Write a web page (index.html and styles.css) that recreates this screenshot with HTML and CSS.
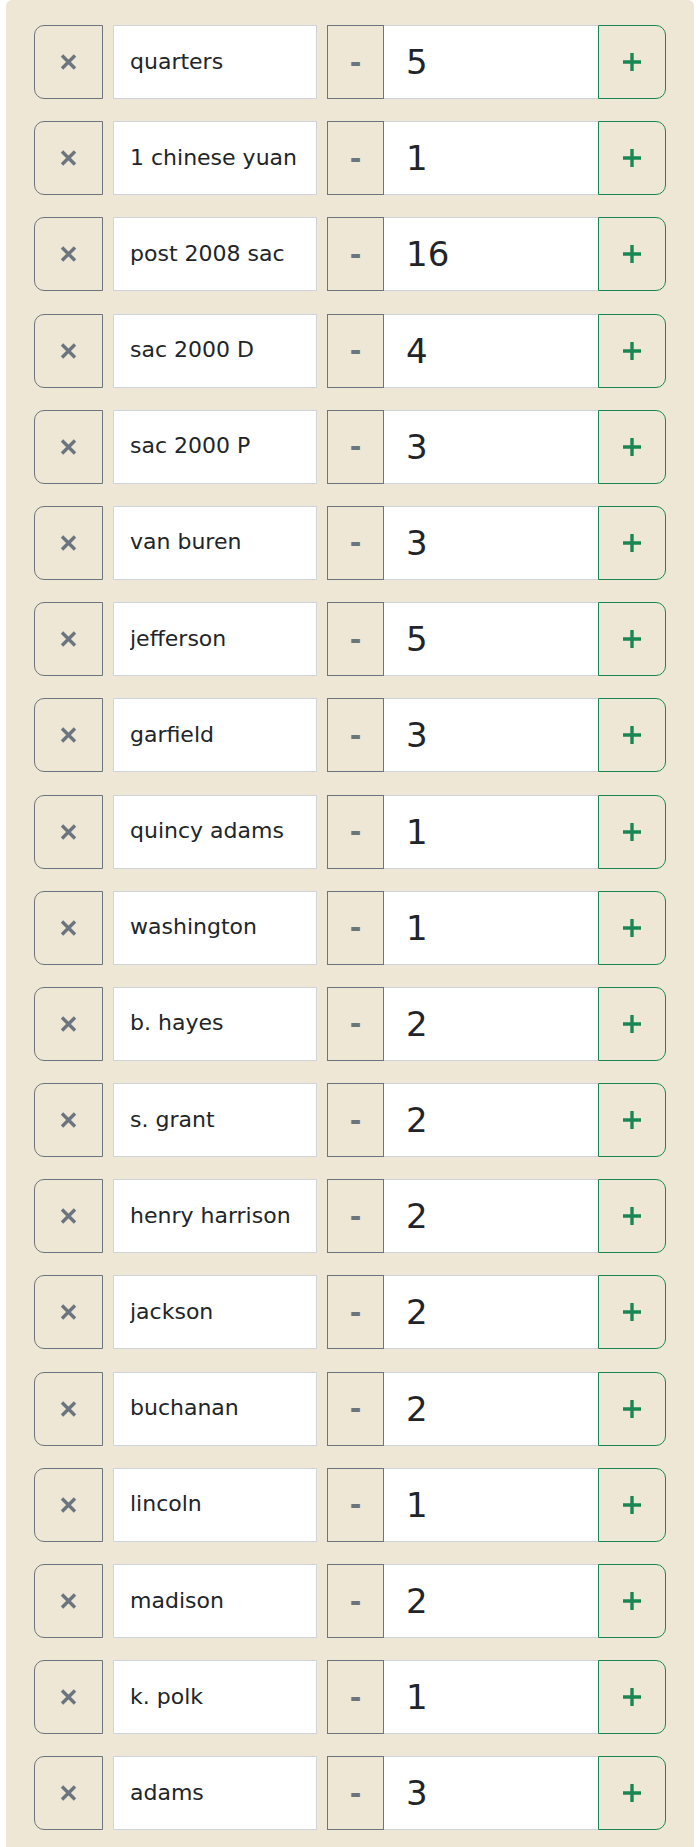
FILE: index.html
```html
<!DOCTYPE html>
<html>
  <head>
    <meta charset="utf-8">
    <title>Coin Counter</title>
    <link rel="stylesheet" href="styles.css">
  </head>
  <body>
    <div class="panel">
      <ul class="coins" id="coins"></ul>
    </div>

    <script>
      const coins = [
        ['quarters', 5], ['1 chinese yuan', 1], ['post 2008 sac', 16],
        ['sac 2000 D', 4], ['sac 2000 P', 3], ['van buren', 3],
        ['jefferson', 5], ['garfield', 3], ['quincy adams', 1],
        ['washington', 1], ['b. hayes', 2], ['s. grant', 2],
        ['henry harrison', 2], ['jackson', 2], ['buchanan', 2],
        ['lincoln', 1], ['madison', 2], ['k. polk', 1], ['adams', 3]
      ];

      const list = document.getElementById('coins');
      coins.forEach(([name, count]) => {
        const row = document.createElement('li');
        row.className = 'coin-row';
        row.innerHTML = `
          <button class="remove" title="remove">
            <svg width="17" height="16" viewBox="0 0 17 16"><path d="M2 1.5 L15 14.5 M15 1.5 L2 14.5" stroke="#6c757d" stroke-width="3.4" fill="none"/></svg>
          </button>
          <input class="name" type="text" value="${name}">
          <div class="counter">
            <button class="dec">-</button>
            <input class="count" type="number" value="${count}">
            <button class="inc">
              <svg width="18" height="18" viewBox="0 0 18 18"><path d="M9 0 V18 M0 9 H18" stroke="#198754" stroke-width="3.4" fill="none"/></svg>
            </button>
          </div>`;
        list.appendChild(row);
      });
    </script>
  </body>
</html>
```

FILE: styles.css
```css
body {
  margin: 0;
  background-color: #fff;
  font-family: "DejaVu Sans", sans-serif;
  color: #212529;
}
.panel {
  margin: 0 6px;
  background-color: #eee7d6;
  border-radius: 6px 6px 0 0;
  padding: 25px 28px 20px;
}
.coins {
  list-style: none;
  margin: 0;
  padding: 0;
  display: flex;
  flex-direction: column;
  gap: 22.2px;
}
.coin-row {
  display: flex;
  gap: 10px;
  height: 74px;
}
button {
  font-family: inherit;
  background: transparent;
  margin: 0;
  padding: 0;
  cursor: pointer;
  display: flex;
  align-items: center;
  justify-content: center;
  flex-shrink: 0;
}
input {
  font-family: inherit;
  color: #212529;
  background-color: #fff;
  border: 1px solid #ced4da;
  border-radius: 0;
  margin: 0;
  box-sizing: border-box;
  height: 74px;
  outline: none;
}
.remove {
  width: 69px;
  border: 1px solid #6c757d;
  border-radius: 10px 0 0 10px;
}
.name {
  width: 204px;
  flex-shrink: 0;
  font-size: 22px;
  padding: 0 16px 2px;
}
.counter {
  display: flex;
  flex: 1;
  min-width: 0;
}
.dec {
  width: 57px;
  border: 1px solid #6c757d;
  color: #6c757d;
  font-size: 28px;
  font-weight: bold;
}
.count {
  flex: 1;
  width: 0;
  min-width: 0;
  font-size: 34px;
  padding: 0 22px;
  border-left: none;
  border-right: none;
  -moz-appearance: textfield;
}
.count::-webkit-inner-spin-button,
.count::-webkit-outer-spin-button {
  -webkit-appearance: none;
  margin: 0;
}
.inc {
  width: 68px;
  border: 1px solid #198754;
  border-radius: 0 10px 10px 0;
}
```
